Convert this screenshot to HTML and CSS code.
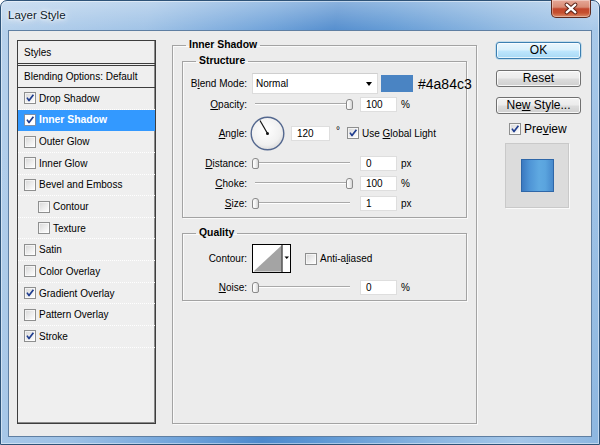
FILE: index.html
```html
<!DOCTYPE html>
<html>
<head>
<meta charset="utf-8">
<title>Layer Style</title>
<link rel="stylesheet" href="styles.css">
</head>
<body>
<div class="window">
  <div class="titlebar">
    <span class="title">Layer Style</span>
    <div class="close">
      <svg width="39" height="17" viewBox="0 0 39 17">
        <path d="M15 4.5 L24 12.5 M24 4.5 L15 12.5" stroke="#5a2418" stroke-width="4.2" stroke-linecap="round"/>
        <path d="M15 4.5 L24 12.5 M24 4.5 L15 12.5" stroke="#ffffff" stroke-width="2.2" stroke-linecap="round"/>
      </svg>
    </div>
  </div>
  <div class="client">
    <div class="styles-list">
      <div class="sl-head">Styles</div>
      <div class="sl-blend">Blending Options: Default</div>
      <div class="sl-item"><span class="cb on"><svg viewBox="0 0 10 10"><path d="M2 4.6 L4 7.6 L8.4 1.8"/></svg></span>Drop Shadow</div>
      <div class="sl-item active"><span class="cb on"><svg viewBox="0 0 10 10"><path d="M2 4.6 L4 7.6 L8.4 1.8"/></svg></span>Inner Shadow</div>
      <div class="sl-item"><span class="cb"></span>Outer Glow</div>
      <div class="sl-item"><span class="cb"></span>Inner Glow</div>
      <div class="sl-item"><span class="cb"></span>Bevel and Emboss</div>
      <div class="sl-item sub"><span class="cb"></span>Contour</div>
      <div class="sl-item sub"><span class="cb"></span>Texture</div>
      <div class="sl-item"><span class="cb"></span>Satin</div>
      <div class="sl-item"><span class="cb"></span>Color Overlay</div>
      <div class="sl-item"><span class="cb on"><svg viewBox="0 0 10 10"><path d="M2 4.6 L4 7.6 L8.4 1.8"/></svg></span>Gradient Overlay</div>
      <div class="sl-item"><span class="cb"></span>Pattern Overlay</div>
      <div class="sl-item"><span class="cb on"><svg viewBox="0 0 10 10"><path d="M2 4.6 L4 7.6 L8.4 1.8"/></svg></span>Stroke</div>
    </div>

    <div class="settings">
      <fieldset class="group outer">
        <legend>Inner Shadow</legend>
        <fieldset class="group structure">
          <legend>Structure</legend>
          <div class="row row-blend">
            <span class="lbl">B<u>l</u>end Mode:</span>
            <div class="select"><span>Normal</span><i class="caret"></i></div>
            <span class="swatch"></span>
            <span class="hex">#4a84c3</span>
          </div>
          <div class="row row-slider row-opacity">
            <span class="lbl"><u>O</u>pacity:</span>
            <div class="slider max"><span class="thumb"></span></div>
            <span class="field">100</span><span class="unit">%</span>
          </div>
          <div class="row row-angle">
            <span class="lbl"><u>A</u>ngle:</span>
            <svg class="dial" width="35" height="35" viewBox="0 0 35 35">
              <defs>
                <radialGradient id="dialfill" cx="45%" cy="40%" r="65%">
                  <stop offset="0" stop-color="#ffffff"/>
                  <stop offset="0.7" stop-color="#f0f0f0"/>
                  <stop offset="1" stop-color="#d6d6d6"/>
                </radialGradient>
              </defs>
              <circle cx="17.5" cy="17.5" r="16.3" fill="url(#dialfill)" stroke="#54688f" stroke-width="1.4"/>
              <path d="M17.5 17.5 L10 4.5" stroke="#111" stroke-width="1.2"/>
              <circle cx="17.5" cy="17.5" r="1.5" fill="#111"/>
            </svg>
            <span class="field wide">120</span><span class="deg">°</span>
            <span class="cb on angle-cb"><svg viewBox="0 0 10 10"><path d="M2 4.6 L4 7.6 L8.4 1.8"/></svg></span>
            <span class="cbl">Use <u>G</u>lobal Light</span>
          </div>
          <div class="row row-slider">
            <span class="lbl"><u>D</u>istance:</span>
            <div class="slider"><span class="thumb"></span></div>
            <span class="field">0</span><span class="unit">px</span>
          </div>
          <div class="row row-slider">
            <span class="lbl"><u>C</u>hoke:</span>
            <div class="slider max"><span class="thumb"></span></div>
            <span class="field">100</span><span class="unit">%</span>
          </div>
          <div class="row row-slider">
            <span class="lbl"><u>S</u>ize:</span>
            <div class="slider"><span class="thumb"></span></div>
            <span class="field">1</span><span class="unit">px</span>
          </div>
        </fieldset>

        <fieldset class="group quality">
          <legend>Quality</legend>
          <div class="row row-contour">
            <span class="lbl">Contour:</span>
            <svg class="contour" width="39" height="29" viewBox="0 0 39 29">
              <rect x="0.5" y="0.5" width="38" height="28" fill="#fff" stroke="#000"/>
              <polygon points="1.5,27.5 29.5,1.5 29.5,27.5" fill="#a4a4a4"/>
              <path d="M30 0.5 V28.5" stroke="#000"/>
              <polygon points="32.5,12.5 37,12.5 34.75,15" fill="#000"/>
            </svg>
            <span class="cb aa-cb"></span>
            <span class="cbl">Anti-a<u>l</u>iased</span>
          </div>
          <div class="row row-slider row-noise">
            <span class="lbl"><u>N</u>oise:</span>
            <div class="slider"><span class="thumb"></span></div>
            <span class="field">0</span><span class="unit">%</span>
          </div>
        </fieldset>
      </fieldset>
    </div>

    <div class="actions">
      <div class="btn default">OK</div>
      <div class="btn reset">Reset</div>
      <div class="btn newstyle">Ne<u>w</u> Style...</div>
      <div class="preview-toggle">
        <span class="cb on"><svg viewBox="0 0 10 10"><path d="M2 4.6 L4 7.6 L8.4 1.8"/></svg></span>
        <span class="pv-label">Pre<u>v</u>iew</span>
      </div>
      <div class="preview-box"><div class="preview-swatch"></div></div>
    </div>
  </div>
</div>
</body>
</html>
```

FILE: styles.css
```css
* { box-sizing: border-box; }
html, body { margin: 0; padding: 0; }
body {
  width: 600px;
  height: 445px;
  overflow: hidden;
  background: #ffffff;
  font-family: "Liberation Sans", Arial, sans-serif;
  font-size: 10px;
  color: #000;
}

.window {
  width: 600px;
  height: 445px;
  display: flex;
  flex-direction: column;
  padding: 0 7px 7px 7px;
  border: 1px solid #2e5378;
  border-radius: 7px 7px 0 0;
  background:
    linear-gradient(180deg, rgba(255,255,255,0.35) 0, rgba(255,255,255,0.05) 29px, rgba(255,255,255,0) 100%),
    linear-gradient(100deg, #b3cfeb 0%, #9cc0e5 22%, #6a9fd8 40%, #4d89cc 50%, #5c96d3 58%, #8ab5e0 75%, #a4c6e8 88%, #8cb6e0 100%);
  box-shadow: inset 0 0 0 1px rgba(255,255,255,0.45);
}

.titlebar {
  height: 29px;
  flex-shrink: 0;
  display: flex;
  justify-content: space-between;
  align-items: flex-start;
}
.title {
  font-family: "Liberation Sans", Arial, sans-serif;
  font-size: 11.5px;
  line-height: 29px;
  color: #0d1a2a;
  text-shadow: 0 0 6px #fff, 0 0 3px #fff, 0 0 10px rgba(255,255,255,0.9);
}
.close {
  width: 40px;
  height: 18px;
  margin-top: -1px;
  margin-right: 1px;
  border: 1px solid #5e2a1e;
  border-top: none;
  border-radius: 0 0 5px 5px;
  background: linear-gradient(180deg, #e6a898 0%, #d88b74 42%, #c2462c 52%, #c6502f 75%, #da8a68 100%);
  box-shadow: inset 0 0 0 1px rgba(255,255,255,0.35);
  display: flex;
  align-items: center;
  justify-content: center;
}
.close svg { display: block; }

.client {
  flex: 1;
  display: flex;
  align-items: flex-start;
  background: #ececec;
  border: 1px solid #5f7fa2;
}

/* ---------- left styles list ---------- */
.styles-list {
  margin: 9px 0 0 8px;
  width: 139px;
  height: 384px;
  flex-shrink: 0;
  border: 1px solid #3d3d3d;
  box-shadow: inset -1px -1px 0 #8a8a8a;
  background: #efefef;
  display: flex;
  flex-direction: column;
}
.sl-head {
  height: 25px;
  flex-shrink: 0;
  padding-left: 6px;
  display: flex;
  align-items: center;
  border-bottom: 3px double #3d3d3d;
}
.sl-blend {
  height: 22px;
  flex-shrink: 0;
  padding-left: 6px;
  display: flex;
  align-items: center;
  border-bottom: 1px solid #3d3d3d;
}
.sl-item {
  height: 21.65px;
  flex-shrink: 0;
  display: flex;
  align-items: center;
  gap: 3px;
  padding-left: 6px;
  border-bottom: 1px dotted #ffffff;
  white-space: nowrap;
}
.sl-item.sub { padding-left: 20px; }
.sl-item.active {
  background: #3399ff;
  color: #fff;
  font-weight: bold;
  font-size: 10.4px;
  border-bottom-color: #3399ff;
}
.sl-item.active .cb { background: #fff; border-color: #7d8fa8; }

/* ---------- checkbox ---------- */
.cb {
  width: 12px;
  height: 12px;
  flex-shrink: 0;
  border: 1px solid #8e8f8f;
  background: linear-gradient(135deg, #d6d6d6 0%, #eeeeee 55%, #ffffff 100%);
  box-shadow: inset 0 0 0 1px rgba(255,255,255,0.6);
  display: flex;
  align-items: center;
  justify-content: center;
}
.cb svg { width: 10px; height: 10px; display: block; }
.cb svg path { fill: none; stroke: #1f3d8f; stroke-width: 1.7; stroke-linejoin: round; }

/* ---------- settings column ---------- */
.settings {
  margin: 7px 0 0 16px;
  width: 305px;
  flex-shrink: 0;
}
.group {
  margin: 0;
  min-width: 0;
  border: 1px solid #a3a3a3;
  box-shadow: 1px 1px 0 #fafafa, inset 1px 1px 0 #fafafa;
}
.group > legend {
  padding: 0 3px;
  font-weight: bold;
  font-size: 10.4px;
  line-height: 14px;
}
.outer {
  height: 386px;
  padding: 2px 9px 0 9px;
}
.outer > legend { margin-left: 4px; }
.structure {
  padding: 0 0 4px 0;
}
.structure > legend, .quality > legend { margin-left: 13px; }
.quality {
  margin-top: 8px;
  padding: 0 0 3px 0;
}

.row {
  display: flex;
  align-items: center;
  white-space: nowrap;
}
.lbl {
  width: 64px;
  flex-shrink: 0;
  text-align: right;
}
.row-blend { height: 23px; margin-top: 4px; }
.row-angle { height: 40px; }
.row-slider { height: 20px; }
.row-opacity { height: 18px; }

.select {
  margin-left: 5px;
  width: 126px;
  height: 21px;
  flex-shrink: 0;
  background: #fff;
  border: 1px solid #dcdcdc;
  border-top-color: #cfcfcf;
  padding-left: 3px;
  display: flex;
  align-items: center;
  justify-content: space-between;
}
.caret {
  width: 0;
  height: 0;
  margin-right: 5px;
  border-left: 3.5px solid transparent;
  border-right: 3.5px solid transparent;
  border-top: 4px solid #000;
}
.swatch {
  margin-left: 3px;
  width: 32px;
  height: 17px;
  flex-shrink: 0;
  background: #4a84c3;
}
.hex {
  margin-left: 5px;
  font-size: 14px;
}

.slider {
  margin-left: 5px;
  width: 101px;
  height: 12px;
  flex-shrink: 0;
  display: flex;
  align-items: center;
  justify-content: flex-start;
  background:
    linear-gradient(180deg, transparent 5px, #a9a9a9 5px, #a9a9a9 6px, #ffffff 6px, #ffffff 7px, transparent 7px) no-repeat 3px 0 / 95px 12px;
}
.slider.max { justify-content: flex-end; }
.thumb {
  width: 7px;
  height: 11px;
  border: 1px solid #8a8a8a;
  border-radius: 3px 3px 2px 2px;
  background: linear-gradient(90deg, #ffffff 0%, #f1f1f1 50%, #d4d4d4 100%);
}

.field {
  margin-left: 7px;
  width: 37px;
  height: 15px;
  flex-shrink: 0;
  background: #fff;
  border: 1px solid #dedede;
  padding-left: 5px;
  line-height: 13px;
}
.field.wide { width: 39px; margin-left: 6px; }
.unit { margin-left: 4px; }
.dial { margin-left: 3px; display: block; flex-shrink: 0; }
.deg { margin-left: 6px; align-self: center; position: relative; top: -3px; }
.angle-cb { margin-left: 7px; }
.cbl { margin-left: 3px; }

.row-contour { height: 29px; margin-top: 4px; }
.contour { margin-left: 5px; display: block; flex-shrink: 0; }
.aa-cb { margin-left: 14px; }
.row-noise { margin-top: 4px; }

/* ---------- right column ---------- */
.actions {
  margin: 11px 0 0 19px;
  width: 85px;
  flex-shrink: 0;
  display: flex;
  flex-direction: column;
}
.btn {
  height: 17px;
  border: 1px solid #707070;
  border-radius: 3px;
  background: linear-gradient(180deg, #f3f3f3 0%, #ebebeb 48%, #dddddd 52%, #cfcfcf 100%);
  box-shadow: inset 0 0 0 1px rgba(255,255,255,0.8);
  font-size: 12px;
  line-height: 15px;
  text-align: center;
}
.btn.default {
  border-color: #3c7fb1;
  background: linear-gradient(180deg, #eaf6fd 0%, #d9f0fc 48%, #bee6fd 52%, #a7d9f5 100%);
  box-shadow: inset 0 0 0 1px rgba(255,255,255,0.7), 0 0 0 0.5px #9ccbe8;
}
.btn.reset { margin-top: 11px; }
.btn.newstyle { margin-top: 10px; }
.preview-toggle {
  margin-top: 9px;
  height: 12px;
  display: flex;
  align-items: center;
}
.preview-toggle .cb { margin-left: 13px; }
.pv-label { margin-left: 3px; font-size: 12px; line-height: 12px; }
.preview-box {
  margin: 8px 0 0 9px;
  width: 64px;
  height: 65px;
  border: 1px solid #c9c9c9;
  box-shadow: 1px 1px 0 #fafafa;
  background: #dcdcdc;
  display: flex;
  align-items: center;
  justify-content: center;
}
.preview-swatch {
  width: 33px;
  height: 33px;
  border: 1px solid #2f67a8;
  background: linear-gradient(90deg, #3b79c0 0%, #4f95d6 25%, #5fa9e1 55%, #5aa4de 75%, #4789cc 100%);
}
```
